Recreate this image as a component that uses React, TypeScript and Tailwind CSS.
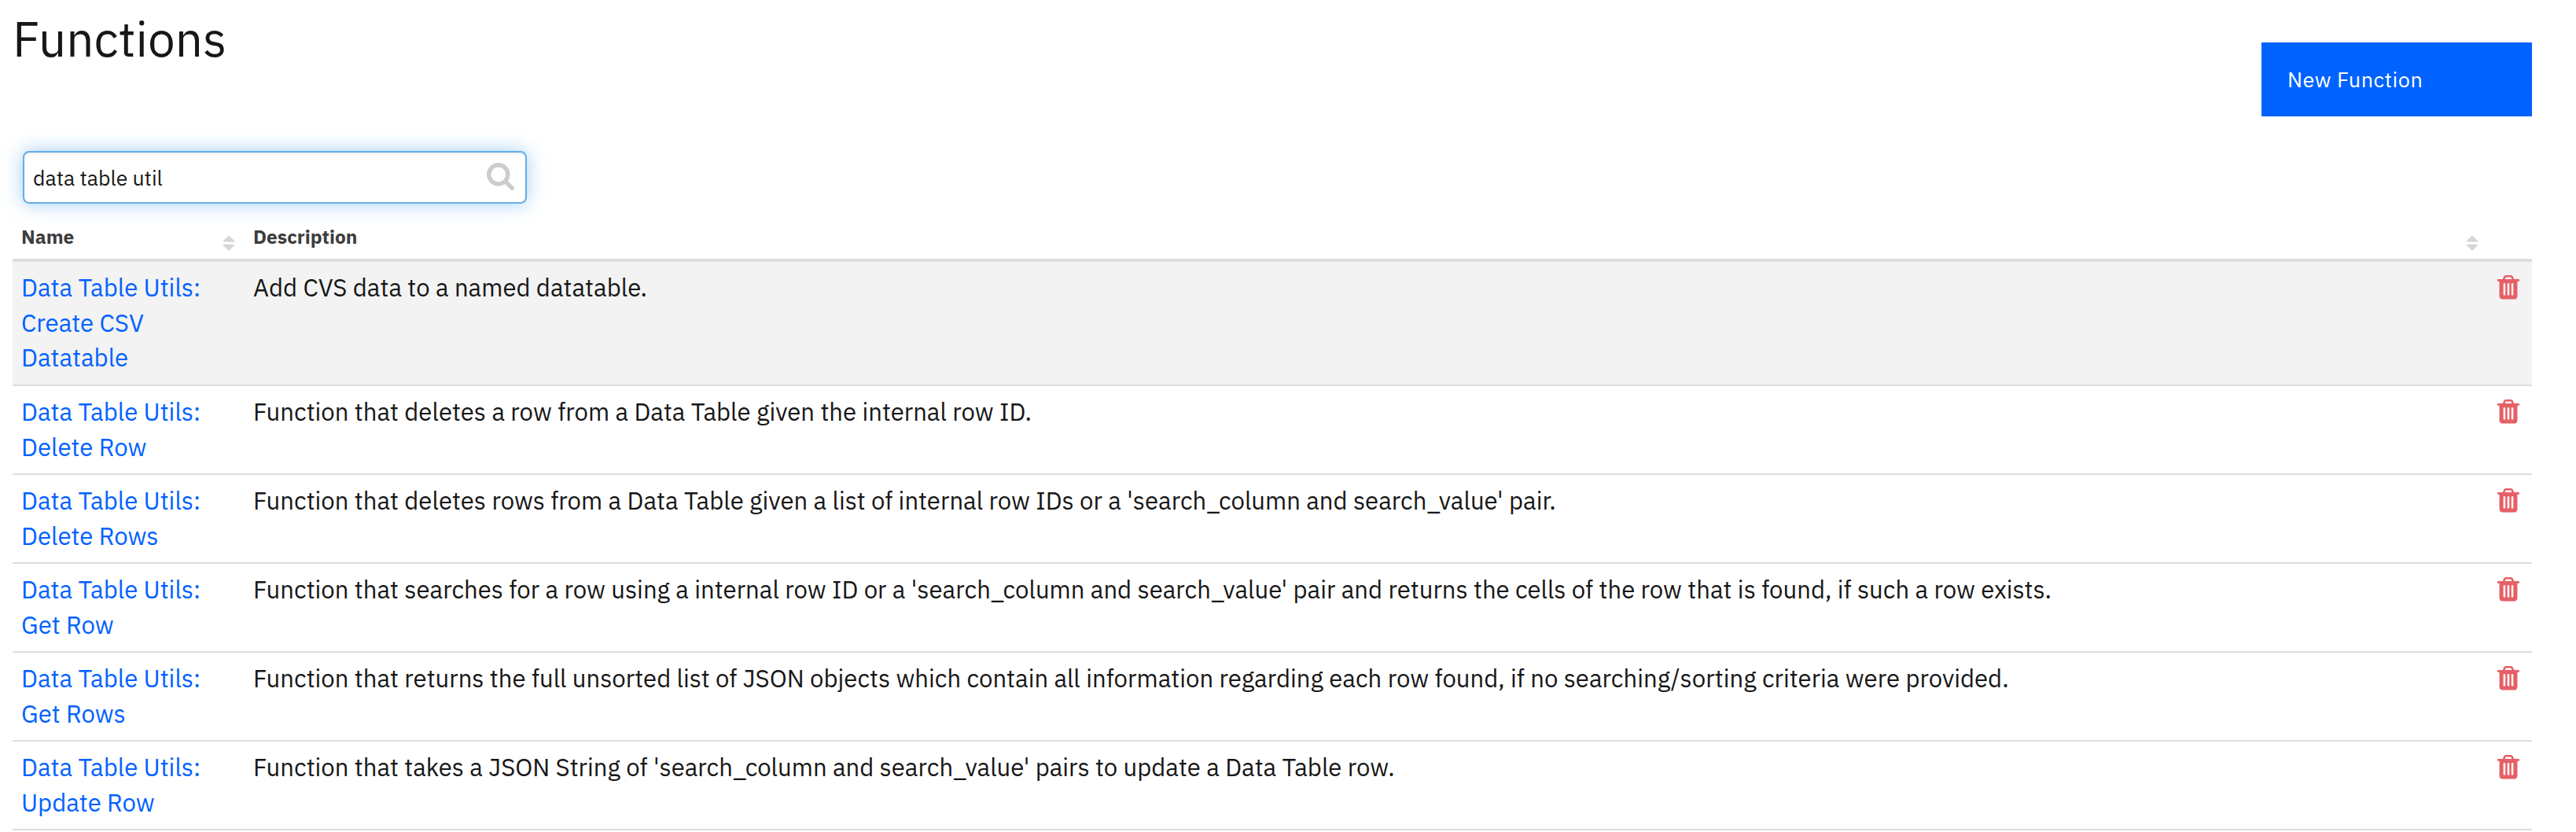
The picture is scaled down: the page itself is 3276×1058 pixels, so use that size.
import React from 'react';

const rows = [
  { name: ['Data Table Utils:', 'Create CSV', 'Datatable'], text: 'Add CVS data to a named datatable.' },
  { name: ['Data Table Utils:', 'Delete Row'], text: 'Function that deletes a row from a Data Table given the internal row ID.' },
  {
    name: ['Data Table Utils:', 'Delete Rows'],
    text: "Function that deletes rows from a Data Table given a list of internal row IDs or a 'search_column and search_value' pair.",
  },
  {
    name: ['Data Table Utils:', 'Get Row'],
    text: "Function that searches for a row using a internal row ID or a 'search_column and search_value' pair and returns the cells of the row that is found, if such a row exists.",
  },
  {
    name: ['Data Table Utils:', 'Get Rows'],
    text: 'Function that returns the full unsorted list of JSON objects which contain all information regarding each row found, if no searching/sorting criteria were provided.',
  },
  {
    name: ['Data Table Utils:', 'Update Row'],
    text: "Function that takes a JSON String of 'search_column and search_value' pairs to update a Data Table row.",
  },
];

function SearchIcon() {
  return (
    <svg className="mt-[2.5px] h-[35px] w-[35px] shrink-0" viewBox="64 128 1664 1664" fill="#cccccc">
      <path d="M1216 832q0-185-131.5-316.5t-316.5-131.5-316.5 131.5-131.5 316.5 131.5 316.5 316.5 131.5 316.5-131.5 131.5-316.5zm512 832q0 52-38 90t-90 38q-54 0-90-38l-343-342q-179 124-399 124-143 0-273.5-55.5t-225-150-150-225-55.5-273.5 55.5-273.5 150-225 225-150 273.5-55.5 273.5 55.5 225 150 150 225 55.5 273.5q0 220-124 399l343 343q37 37 37 90z" />
    </svg>
  );
}

function SortIcon() {
  return (
    <svg className="h-[20px] w-[16px] shrink-0" viewBox="0 0 16 20" fill="#d6d6d6">
      <path d="M1.2 8.6Q0 8.6 .9 7.2L6.8 1.4Q8 .2 9.2 1.4L15.1 7.2Q16 8.6 14.8 8.6Z" />
      <path d="M1.2 11.8Q0 11.8 .9 13L6.8 18.8Q8 20 9.2 18.8L15.1 13Q16 11.8 14.8 11.8Z" />
    </svg>
  );
}

function TrashIcon() {
  return (
    <svg className="h-[30.5px] w-[28px]" viewBox="192 128 1408 1536" fill="#e65f66">
      <path d="M704 1376v-704q0-14-9-23t-23-9h-64q-14 0-23 9t-9 23v704q0 14 9 23t23 9h64q14 0 23-9t9-23zm256 0v-704q0-14-9-23t-23-9h-64q-14 0-23 9t-9 23v704q0 14 9 23t23 9h64q14 0 23-9t9-23zm256 0v-704q0-14-9-23t-23-9h-64q-14 0-23 9t-9 23v704q0 14 9 23t23 9h64q14 0 23-9t9-23zm-544-992h448l-48-117q-7-9-17-11h-317q-10 2-17 11zm928 32v64q0 14-9 23t-23 9h-96v948q0 83-47 143.5t-113 60.5h-832q-66 0-113-58.5t-47-141.5v-952h-96q-14 0-23-9t-9-23v-64q0-14 9-23t23-9h309l70-167q15-37 54-63t79-26h320q40 0 79 26t54 63l70 167h309q14 0 23 9t9 23z" />
    </svg>
  );
}

export default function App() {
  return (
    <main className="h-[1058px] w-[3276px] overflow-hidden bg-white pl-4 font-['IBM_Plex_Sans','Roboto',sans-serif] text-[#171717]">
      <header className="flex h-[192px] w-[3204px] items-start justify-between">
        <h1 className="pt-[10px] text-[62px] leading-[78px]">Functions</h1>
        <button className="mt-[54px] h-[94px] w-[344px] bg-[#0062ff] pl-[33px] text-left text-[27px] leading-[36px] tracking-[0.5px] text-white">
          New Function
        </button>
      </header>

      <div className="ml-[13px] flex h-[67px] w-[641px] justify-between rounded-[8px] border-2 border-[#66afe9] bg-white pt-[10px] pr-[14px] pl-[11px] shadow-[inset_0_2px_2px_rgba(0,0,0,0.075),0_0_24px_rgba(102,175,233,0.6)]">
        <span className="pt-[4px] text-[26.6px] leading-[36px]">data table util</span>
        <SearchIcon />
      </div>

      <section className="w-[3204px]">
        <div className="flex h-[74px] border-b-4 border-[#dddddd] text-[24.5px] leading-[32px] font-bold text-[#3d3d3d]">
          <div className="flex w-[296px] justify-between pt-[26px] pr-[13px] pl-[11px]">
            <span>Name</span>
            <span className="pt-[14px]">
              <SortIcon />
            </span>
          </div>
          <div className="flex w-[2840px] justify-between pt-[26px] pl-[10px]">
            <span>Description</span>
            <span className="pt-[14px]">
              <SortIcon />
            </span>
          </div>
        </div>

        {rows.map((row, i) => (
          <div
            key={row.text}
            className={
              'flex border-b-2 border-[#dddddd] pt-[11px] text-[31.14px] leading-[44.57px] ' +
              (i === 0 ? 'h-[158px] bg-[#f3f3f3]' : 'h-[113px] bg-white')
            }
          >
            <div className="w-[296px] pl-[11px] text-[#0062ff]">
              {row.name.map((line) => (
                <div key={line}>{line}</div>
              ))}
            </div>
            <div className="w-[2864px] pl-[10px] whitespace-nowrap">{row.text}</div>
            <div className="pt-[6px]">
              <TrashIcon />
            </div>
          </div>
        ))}
      </section>
    </main>
  );
}
